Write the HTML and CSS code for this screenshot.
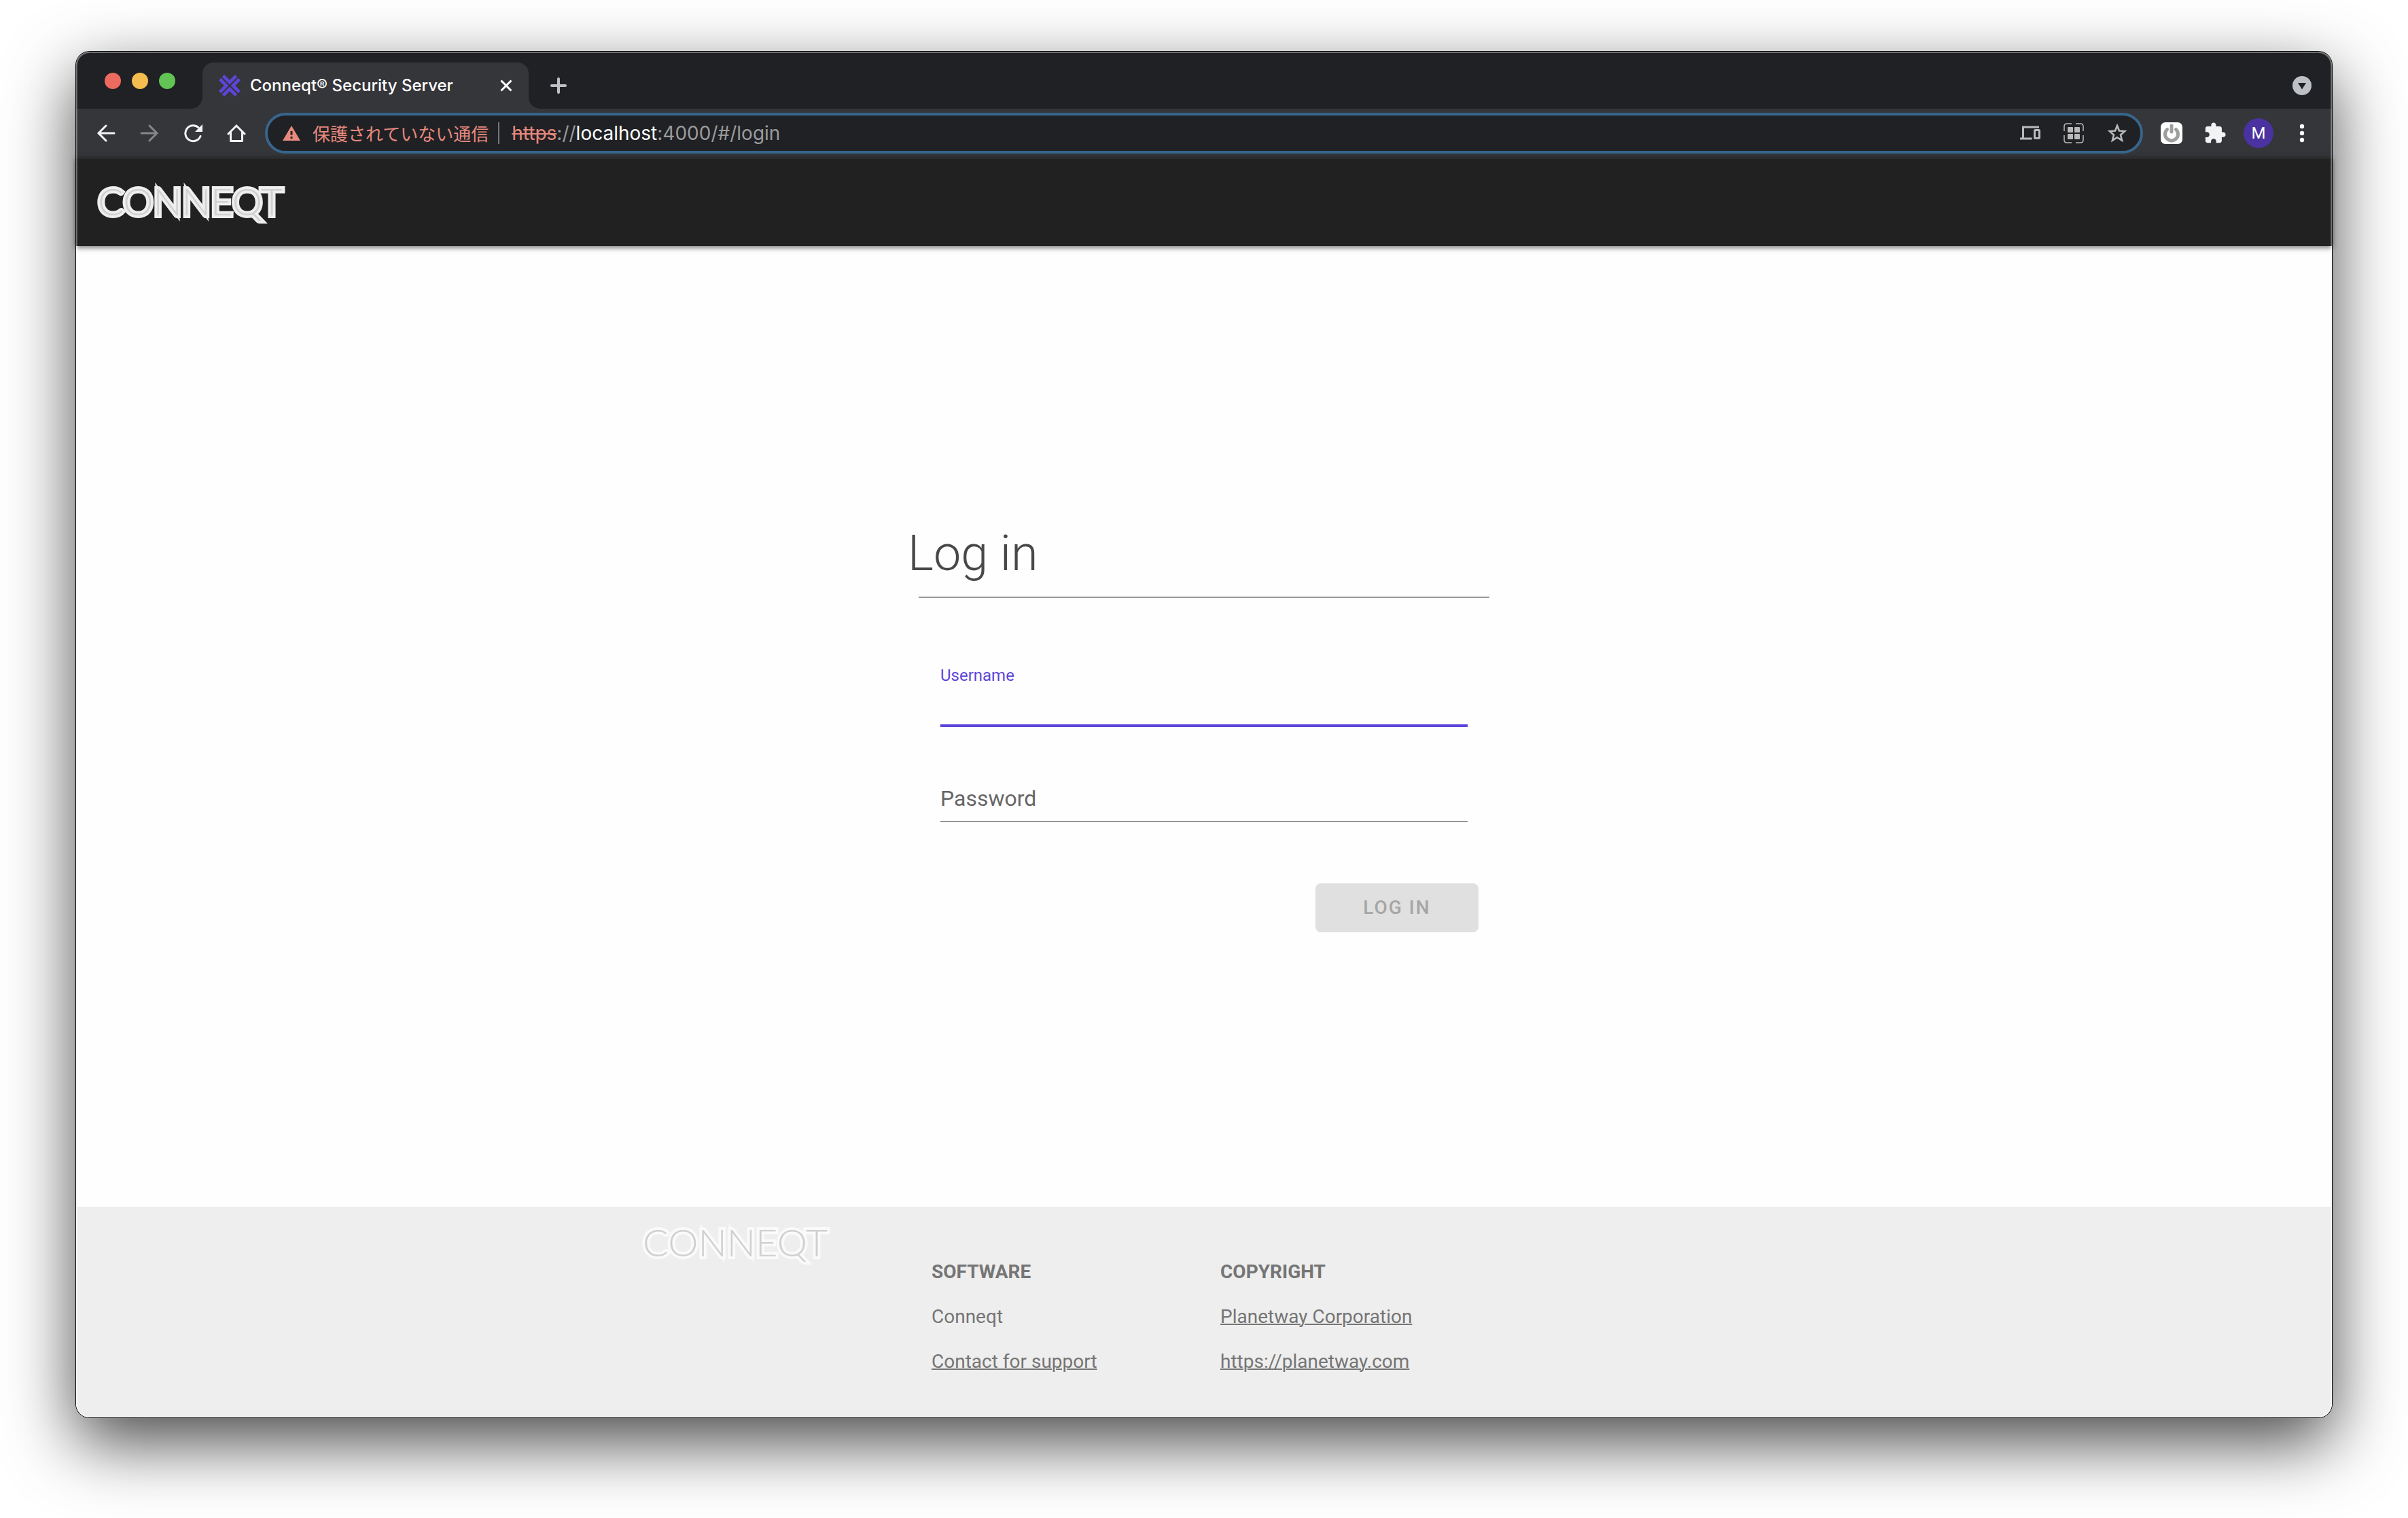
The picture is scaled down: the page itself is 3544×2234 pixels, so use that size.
FILE: index.html
```html
<!DOCTYPE html>
<html lang="ja">
<head>
<meta charset="utf-8">
<title>Conneqt® Security Server</title>
<link rel="stylesheet" href="styles.css">
</head>
<body>
<div class="window">
  <div class="tabstrip">
    <div class="lights">
      <button class="light light-close" aria-label="Close"></button>
      <button class="light light-min" aria-label="Minimize"></button>
      <button class="light light-max" aria-label="Zoom"></button>
    </div>
    <div class="tab">
      <svg class="favicon" width="32" height="32" viewBox="0 0 32 32" fill="none" stroke="#5d45d9" stroke-width="4.6" stroke-linecap="butt" stroke-linejoin="miter">
        <path d="M6.500 1.700L16 11.200L25.500 1.700M6.500 30.300L16 20.800L25.500 30.300M1.700 6.500L11.200 16L1.700 25.500M30.300 6.500L20.800 16L30.300 25.500"/>
      </svg>
      <span class="tab-title">Conneqt® Security Server</span>
      <button class="tab-close" aria-label="Close tab">
        <svg width="18" height="18" viewBox="0 0 18 18" stroke="#fff" stroke-width="3"><path d="M1.500 1.500L16.500 16.500M16.500 1.500L1.500 16.500"/></svg>
      </button>
    </div>
    <button class="icon-btn new-tab" aria-label="New tab">
      <svg width="24" height="24" viewBox="0 0 24 24" stroke="#bdc1c6" stroke-width="4" stroke-linecap="round"><path d="M12 2V22M2 12H22"/></svg>
    </button>
    <button class="icon-btn tab-search" aria-label="Search tabs">
      <svg width="28" height="28" viewBox="0 0 28 28"><circle cx="14" cy="14" r="14" fill="#bdc1c6"/><path d="M8 10H20L14 19.500Z" fill="#202124"/></svg>
    </button>
  </div>

  <div class="toolbar">
    <button class="icon-btn" aria-label="Back">
      <svg width="28" height="28" viewBox="0 0 28 28" fill="none" stroke="#f1f3f4" stroke-width="3" stroke-linecap="round"><path d="M26 14H3M14 3L3 14L14 25"/></svg>
    </button>
    <button class="icon-btn" aria-label="Forward">
      <svg width="28" height="28" viewBox="0 0 28 28" fill="none" stroke="#85868a" stroke-width="3" stroke-linecap="round"><path d="M2 14H25M14 3L25 14L14 25"/></svg>
    </button>
    <button class="icon-btn" aria-label="Reload">
      <svg width="28" height="28" viewBox="0 0 28 28" fill="none" stroke="#f1f3f4" stroke-width="3" stroke-linecap="round"><path d="M25 18.500A11.500 11.500 0 1 1 22 5.600"/><path d="M28 1V12H17Z" fill="#f1f3f4" stroke="none"/></svg>
    </button>
    <button class="icon-btn" aria-label="Home">
      <svg width="28" height="28" viewBox="0 0 28 28" fill="none" stroke="#f1f3f4" stroke-width="3"><path d="M2 15L14 3L26 15" stroke-linecap="round"/><path d="M5.500 12V25.500H22.500V12" stroke-linejoin="round"/></svg>
    </button>
    <div class="address">
      <svg class="warn" width="26" height="22" viewBox="0 0 26 22"><path d="M13 0L26 22H0Z" fill="#e8897e"/><path d="M13 8V13.500M13 16V19" stroke="#202124" stroke-width="3"/></svg>
      <span class="warn-text">保護されていない通信</span>
      <span class="divider"></span>
      <span class="url"><s>https</s>://<b>localhost</b>:4000/#/login</span>
      <button class="icon-btn" aria-label="Send to your devices">
        <svg width="30" height="22" viewBox="0 0 30 22" fill="none" stroke="#bababa" stroke-width="3"><path d="M28 2H4.500V18"/><path d="M0 19H17.500"/><rect x="21.500" y="6.500" width="7" height="12" rx="1"/></svg>
      </button>
      <button class="icon-btn" aria-label="QR code">
        <svg width="30" height="30" viewBox="0 0 30 30" fill="none" stroke="#bababa" stroke-width="1.500"><path d="M12 1H5Q1 1 1 5V12M18 1H25Q29 1 29 5V12M1 18V25Q1 29 5 29H12M29 18V25Q29 29 25 29H18"/><g fill="#bababa" stroke="none"><rect x="6" y="6" width="8" height="8" rx="1"/><rect x="16" y="6" width="8" height="8" rx="1"/><rect x="6" y="16" width="8" height="8" rx="1"/><rect x="16" y="16" width="8" height="8" rx="1"/></g></svg>
      </button>
      <button class="icon-btn" aria-label="Bookmark">
        <svg width="30" height="30" viewBox="0 0 30 30" fill="none" stroke="#bababa" stroke-width="2.600"><path d="M15 4L18 11.500L26.200 12L20 17.500L22 25.600L15 21.200L8 25.600L10 17.500L3.800 12L12 11.500Z"/></svg>
      </button>
    </div>
    <button class="icon-btn" aria-label="Extension">
      <svg width="32" height="32" viewBox="0 0 32 32" fill="none" stroke="#9e9e9e" stroke-linecap="round"><rect width="32" height="32" rx="7" fill="#fff" stroke="none"/><path d="M9.500 10.500A9.500 9.500 0 1 0 22.500 10.500" stroke-width="5"/><path d="M16 5V14" stroke-width="5"/></svg>
    </button>
    <button class="icon-btn" aria-label="Extensions">
      <svg width="34" height="34" viewBox="0 0 24 24" fill="#f1f3f4"><path d="M20.500 11H19V7c0-1.100-.9-2-2-2h-4V3.500C13 2.120 11.880 1 10.500 1S8 2.120 8 3.500V5H4c-1.100 0-1.990.9-1.990 2v3.800H3.500c1.490 0 2.700 1.210 2.700 2.700s-1.210 2.700-2.700 2.700H2V20c0 1.100.9 2 2 2h3.800v-1.500c0-1.490 1.210-2.700 2.700-2.700 1.490 0 2.700 1.210 2.700 2.700V22H17c1.100 0 2-.9 2-2v-4h1.500c1.380 0 2.500-1.120 2.500-2.500S21.880 11 20.500 11z"/></svg>
    </button>
    <button class="icon-btn" aria-label="Profile"><span class="avatar">M</span></button>
    <button class="icon-btn" aria-label="Menu">
      <svg width="8" height="28" viewBox="0 0 8 28" fill="#fff"><circle cx="4" cy="4" r="3.200"/><circle cx="4" cy="14" r="3.200"/><circle cx="4" cy="24" r="3.200"/></svg>
    </button>
  </div>

  <header class="app-bar"><span class="logo">CONNEQT</span></header>

  <main class="main">
    <form class="login">
      <h1 class="login-title">Log in</h1>
      <hr class="login-rule">
      <div class="field field-active">
        <input class="field-input" id="username" type="text">
        <label class="field-label" for="username">Username</label>
      </div>
      <div class="field">
        <input class="field-input" id="password" type="password">
        <label class="field-label" for="password">Password</label>
      </div>
      <button class="login-btn" type="submit" disabled>LOG IN</button>
    </form>
  </main>

  <footer class="footer">
    <div class="footer-grid">
      <div class="footer-col"><span class="logo logo-light">CONNEQT</span></div>
      <div class="footer-col footer-text">
        <h2>SOFTWARE</h2>
        <p>Conneqt</p>
        <p><a href="#support">Contact for support</a></p>
      </div>
      <div class="footer-col footer-text">
        <h2>COPYRIGHT</h2>
        <p><a href="#planetway">Planetway Corporation</a></p>
        <p><a href="#site">https://planetway.com</a></p>
      </div>
    </div>
  </footer>
</div>
</body>
</html>
```
FILE: styles.css
```css
* { box-sizing: border-box; }

body {
  margin: 0;
  min-height: 100vh;
  padding: 76px 112px 148px;
  display: flex;
  flex-direction: column;
  background: #fff;
  font-family: Roboto, "Noto Sans CJK JP", sans-serif;
}

button {
  margin: 0;
  padding: 0;
  border: 0;
  background: none;
  font-family: inherit;
}

svg { display: block; }

.window {
  position: relative;
  flex: 1;
  display: flex;
  flex-direction: column;
  border-radius: 20px;
  background: #fff;
  box-shadow: 0 0 0 1px #000, 0 36px 100px rgba(0, 0, 0, .72);
}

/* glass edge over the window's content */
.window::after {
  content: "";
  position: absolute;
  inset: 0;
  border-radius: 20px;
  box-shadow: inset 0 0 0 2px rgba(255, 255, 255, .25), inset 0 1px 0 1px rgba(255, 255, 255, .15);
  pointer-events: none;
}

/* tab strip */
.tabstrip {
  display: flex;
  height: 84px;
  padding: 16px 12px 0 42px;
  border-radius: 20px 20px 0 0;
  background: #202124;
}

.lights {
  display: flex;
  align-items: center;
  gap: 16px;
  height: 54px;
  margin-right: 40px;
}

.light { width: 24px; height: 24px; border-radius: 50%; }
.light-close { background: #ed6a5e; }
.light-min { background: #f5bd4f; }
.light-max { background: #61c454; }

.tab {
  position: relative;
  display: flex;
  align-items: center;
  width: 480px;
  padding: 0 24px;
  border-radius: 16px 16px 0 0;
  background: #35363a;
}

.tab::before,
.tab::after {
  content: "";
  position: absolute;
  bottom: 0;
  width: 16px;
  height: 16px;
}

.tab::before { right: 100%; background: radial-gradient(circle at 0 0, transparent 15px, #35363a 16px); }
.tab::after { left: 100%; background: radial-gradient(circle at 100% 0, transparent 15px, #35363a 16px); }

.tab-title {
  margin-left: 14px;
  color: #fff;
  font: 500 24px/32px Inter, sans-serif;
  white-space: nowrap;
}

.tab-close { margin-left: auto; }

.icon-btn {
  display: flex;
  flex: none;
  align-items: center;
  justify-content: center;
  width: 64px;
  align-self: stretch;
}

.new-tab { margin-left: 12px; }
.tab-search { margin-left: auto; }

/* toolbar */
.toolbar {
  display: flex;
  align-items: center;
  height: 72px;
  padding: 0 12px;
  background: #35363a;
}

.address {
  display: flex;
  flex: 1;
  align-items: center;
  height: 60px;
  margin: 0 10px;
  padding: 0 2px 0 22px;
  border: 4px solid #37658c;
  border-radius: 30px;
  background: #202124;
  white-space: nowrap;
}

.warn-text {
  margin-left: 18px;
  color: #e8897e;
  font: 26px/32px "Noto Sans CJK JP", sans-serif;
}

.divider {
  width: 2px;
  height: 32px;
  margin: 0 18px 0 14px;
  background: #747678;
}

.url {
  margin-right: auto;
  color: #9a9b9d;
  font: 28px/32px Inter, sans-serif;
}

.url s { color: #e8897e; }
.url b { color: #fff; font-weight: 400; }

.avatar {
  width: 44px;
  height: 44px;
  border-radius: 50%;
  background: #4a32a0;
  color: #fff;
  font-size: 24px;
  line-height: 44px;
  text-align: center;
}

/* page */
.app-bar {
  position: relative;
  height: 130px;
  padding: 26px 32px;
  border-top: 2px solid #2b2b2c;
  background: #212121;
  box-shadow: 0 2px 8px rgba(0, 0, 0, .6);
}

.logo {
  display: block;
  color: #cfd1d1;
  font: 300 56px/72px Lato, sans-serif;
  -webkit-text-stroke: 8px #eee;
  paint-order: stroke fill;
}

.logo-light { -webkit-text-stroke-color: #fafafa; }

.main {
  flex: 1;
  display: flex;
  align-items: center;
  justify-content: center;
  background: #fefefe;
}

.login {
  display: flex;
  flex-direction: column;
  width: 872px;
}

.login-title {
  margin: 0;
  color: #484848;
  font-size: 72px;
  font-weight: 300;
  line-height: 96px;
}

.login-rule {
  width: auto;
  height: 2px;
  margin: 15px 16px 98px;
  border: 0;
  background: #999;
}

.field {
  position: relative;
  height: 92px;
  margin: 0 48px 48px;
}

.field-input {
  display: block;
  width: 100%;
  height: 100%;
  padding: 32px 0 0;
  border: 0;
  border-bottom: 2px solid #949494;
  outline: 0;
  background: none;
  font: 32px/48px Roboto, sans-serif;
}

.field-label {
  position: absolute;
  left: 0;
  bottom: 11px;
  color: #666;
  font-size: 32px;
  line-height: 48px;
}

.field-active .field-input { border-bottom: 4px solid #5d45d9; }

.field-active .field-label {
  top: 0;
  bottom: auto;
  color: #5d45d9;
  font-size: 24px;
  line-height: 32px;
}

.login-btn {
  align-self: flex-end;
  width: 240px;
  height: 72px;
  margin: 42px 32px 0 0;
  border-radius: 8px;
  background: #e0e0e0;
  color: #a6a6a6;
  font-size: 28px;
  font-weight: 500;
  letter-spacing: 2px;
}

.footer {
  height: 310px;
  border-radius: 0 0 20px 20px;
  background: #eee;
}

.footer-grid {
  display: grid;
  grid-template-columns: repeat(4, 1fr);
  max-width: 1700px;
  margin: 0 auto;
}

.footer-col { padding: 16px 24px; }
.footer-text { padding-top: 80px; }

.footer-text h2,
.footer-text p {
  margin: 0 0 34px;
  color: #757575;
  font-size: 28px;
  font-weight: 400;
  line-height: 32px;
}

.footer-text h2 { font-weight: 700; }

.footer-text a {
  color: inherit;
  text-decoration-thickness: 2px;
}
```
